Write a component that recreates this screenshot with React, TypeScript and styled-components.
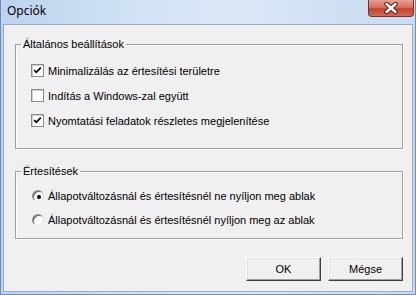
import React from "react";
import styled, { createGlobalStyle } from "styled-components";

const Global = createGlobalStyle`
  html, body { margin: 0; padding: 0; background: #ffffff; }
  body { font-family: "Liberation Sans", Arial, sans-serif; }
`;

const Frame = styled.div`
  width: 416px;
  height: 295px;
  box-sizing: border-box;
  display: flex;
  flex-direction: column;
  padding: 0 2px 2px 2px;
  border: 1px solid #6f8db3;
  border-top: none;
  background: linear-gradient(to right, #bdd3ee 0%, #d2e3f5 35%, #dbe8f7 55%, #c8dbf1 100%);
`;

const TitleBar = styled.div`
  height: 24px;
  display: flex;
  align-items: flex-start;
  justify-content: space-between;
`;

const Title = styled.div`
  font-family: "Noto Sans", "Liberation Sans", sans-serif;
  font-size: 12px;
  line-height: 22px;
  color: #000;
  padding-left: 4px;
`;

const CloseButton = styled.div`
  width: 46px;
  height: 17px;
  margin-right: -1px;
  box-sizing: border-box;
  border: 1px solid #7b3226;
  border-top: none;
  border-radius: 0 0 4px 4px;
  background: linear-gradient(to bottom, #e6a192 0%, #d77261 45%, #c4432e 55%, #d06a54 100%);
  display: flex;
  align-items: center;
  justify-content: center;
`;

const Client = styled.div`
  flex: 1;
  background: #f0f0f0;
  border: 1px solid #9aacc3;
  padding: 19px 9px 0 11px;
  display: flex;
  flex-direction: column;
  font-size: 11px;
  color: #000;
`;

const Group = styled.div<{ $top: number; $pt: number; $pb: number }>`
  position: relative;
  margin-top: ${(p) => p.$top}px;
  padding: ${(p) => p.$pt}px 0 ${(p) => p.$pb}px 0;
  border: 1px solid #a0a0a0;
  box-shadow: inset 1px 1px 0 #ffffff, 1px 1px 0 #ffffff;
  display: flex;
  flex-direction: column;
`;

const GroupTitle = styled.span`
  position: absolute;
  top: -8px;
  left: 5px;
  padding: 0 2px;
  background: #f0f0f0;
  line-height: 14px;
  font-size: 11px;
`;

const Row = styled.label<{ $h: number }>`
  height: ${(p) => p.$h}px;
  display: flex;
  align-items: center;
  gap: 4px;
  padding-left: 15px;
  white-space: nowrap;
`;

const CheckBox = styled.span`
  width: 13px;
  height: 13px;
  box-sizing: border-box;
  border: 1px solid #8c8c8c;
  background: #ffffff;
  box-shadow: inset 1px 1px 0 #d0d0d0;
  display: flex;
  align-items: center;
  justify-content: center;
`;

const RadioCircle = styled.span`
  width: 12px;
  height: 12px;
  margin-left: 1px;
  box-sizing: border-box;
  border-radius: 50%;
  border: 1px solid;
  border-color: #8a8a8a #d8d8d8 #e8e8e8 #8a8a8a;
  background: #ffffff;
  box-shadow: inset 1px 1px 0 #5f5f5f;
  display: flex;
  align-items: center;
  justify-content: center;
`;

const Dot = styled.span`
  width: 4px;
  height: 4px;
  border-radius: 50%;
  background: #000;
  margin: 1px 0 0 1px;
`;

const ButtonRow = styled.div`
  margin-top: 18px;
  display: flex;
  justify-content: flex-end;
  gap: 7px;
`;

const Button = styled.div`
  width: 75px;
  height: 24px;
  box-sizing: border-box;
  border: 1px solid;
  border-color: #ffffff #404040 #404040 #ffffff;
  box-shadow: inset -1px -1px 0 #a0a0a0, inset 1px 1px 0 #e3e3e3;
  background: #f0f0f0;
  display: flex;
  align-items: center;
  justify-content: center;
  font-size: 11px;
`;

const CheckMark = () => (
  <svg width="9" height="9" viewBox="0 0 9 9">
    <polyline points="1.2,4 3.3,6.3 7.8,1.6" fill="none" stroke="#000" strokeWidth="1.8" />
  </svg>
);

const CloseGlyph = () => (
  <svg width="16" height="12" viewBox="0 0 16 12">
    <path d="M3.5 2 L12.5 10 M12.5 2 L3.5 10" stroke="#5e1f16" strokeWidth="4.4" strokeLinecap="round" />
    <path d="M3.5 2 L12.5 10 M12.5 2 L3.5 10" stroke="#ffffff" strokeWidth="2.4" strokeLinecap="round" />
  </svg>
);

const checks = [
  { text: "Minimalizálás az értesítési területre", on: true },
  { text: "Indítás a Windows-zal együtt", on: false },
  { text: "Nyomtatási feladatok részletes megjelenítése", on: true },
];

const radios = [
  { text: "Állapotváltozásnál és értesítésnél ne nyíljon meg ablak", on: true },
  { text: "Állapotváltozásnál és értesítésnél nyíljon meg az ablak", on: false },
];

export default function App() {
  return (
    <>
      <Global />
      <Frame>
        <TitleBar>
          <Title>Opciók</Title>
          <CloseButton>
            <CloseGlyph />
          </CloseButton>
        </TitleBar>
        <Client>
          <Group $top={0} $pt={13} $pb={15}>
            <GroupTitle>Általános beállítások</GroupTitle>
            {checks.map((c) => (
              <Row key={c.text} $h={25}>
                <CheckBox>{c.on && <CheckMark />}</CheckBox>
                <span>{c.text}</span>
              </Row>
            ))}
          </Group>
          <Group $top={22} $pt={12} $pb={6}>
            <GroupTitle>Értesítések</GroupTitle>
            {radios.map((r) => (
              <Row key={r.text} $h={24}>
                <RadioCircle>{r.on && <Dot />}</RadioCircle>
                <span>{r.text}</span>
              </Row>
            ))}
          </Group>
          <ButtonRow>
            <Button>OK</Button>
            <Button>Mégse</Button>
          </ButtonRow>
        </Client>
      </Frame>
    </>
  );
}
